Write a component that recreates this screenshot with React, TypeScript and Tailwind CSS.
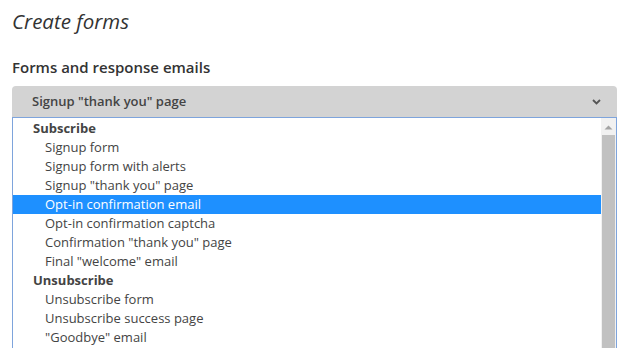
import { useState } from "react";

type Group = { label: string; options: string[] };

const groups: Group[] = [
  {
    label: "Subscribe",
    options: [
      "Signup form",
      "Signup form with alerts",
      'Signup "thank you" page',
      "Opt-in confirmation email",
      "Opt-in confirmation captcha",
      'Confirmation "thank you" page',
      'Final "welcome" email',
    ],
  },
  {
    label: "Unsubscribe",
    options: ["Unsubscribe form", "Unsubscribe success page", '"Goodbye" email'],
  },
];

const App = () => {
  const [active, setActive] = useState("Opt-in confirmation email");

  return (
    <div className="h-[348px] overflow-hidden bg-white pl-3 pr-[1px] pt-[7px] font-['Open_Sans',sans-serif] text-[#333]">
      <h1 className="text-[20.5px] italic leading-[28px] text-[#333]">Create forms</h1>

      <div className="mt-[22px] text-[15px] font-semibold leading-[20px] text-[#333]">
        Forms and response emails
      </div>

      {/* select */}
      <div className="mt-[9px] flex h-[31px] items-center justify-between rounded-t-[4px] bg-[#d3d3d3] pl-5 pr-[16px]">
        <span className="text-[13px] font-semibold text-[#444]">Signup "thank you" page</span>
        <svg width="9" height="6" viewBox="0 0 9 6" className="mt-[1px]">
          <path d="M1 1l3.5 3.5L8 1" fill="none" stroke="#555" strokeWidth="1.8" />
        </svg>
      </div>

      {/* list */}
      <div className="flex border border-b-0 border-[#7ea4dc]">
        <div className="flex-1 pt-[1px]">
          {groups.map((g) => (
            <div key={g.label}>
              <div className="h-[19px] pl-5 text-[13px] font-bold leading-[19px] text-[#444]">{g.label}</div>
              {g.options.map((o) => (
                <div
                  key={o}
                  onClick={() => setActive(o)}
                  className={
                    o === active
                      ? "h-[19px] bg-[#1e90ff] pl-8 text-[13px] leading-[19px] text-white"
                      : "h-[19px] pl-8 text-[13px] leading-[19px] text-[#444]"
                  }
                >
                  {o}
                </div>
              ))}
            </div>
          ))}
        </div>
        <div className="flex w-[15px] flex-col items-center bg-[#f1f1f1]">
          <svg width="9" height="5" viewBox="0 0 9 5" className="mt-[7px]">
            <path d="M0.5 4.5L4.5 0.5L8.5 4.5Z" fill="#a3a3a3" />
          </svg>
          <div className="mt-[5px] h-[240px] w-[13px] bg-[#c1c1c1]" />
        </div>
      </div>
    </div>
  );
};

export default App;
